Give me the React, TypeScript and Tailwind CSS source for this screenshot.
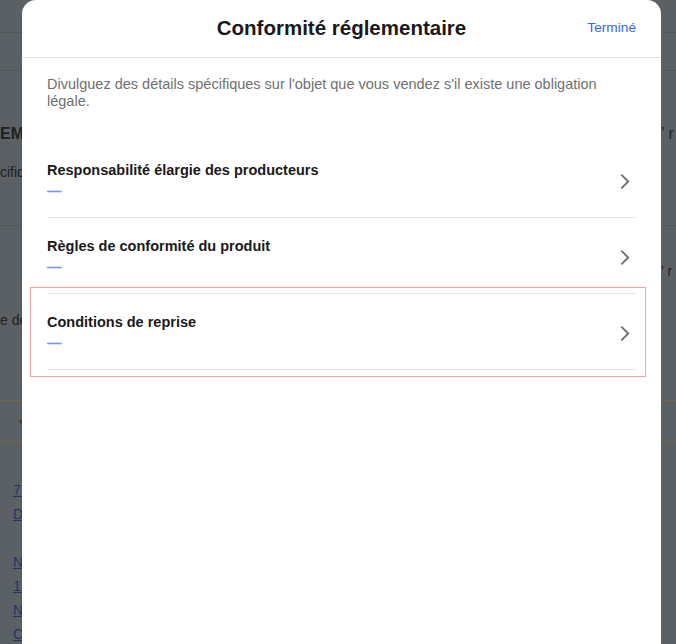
import React from "react";

function Chevron() {
  return (
    <svg width="10" height="15" viewBox="0 0 10 15" fill="none" className="block">
      <path d="M1.8 1.2 L8.2 7.5 L1.8 13.8" stroke="#6e6e6e" strokeWidth="1.8" strokeLinecap="round" strokeLinejoin="round" />
    </svg>
  );
}

function Item({ title, highlight }: { title: string; highlight?: boolean }) {
  return (
    <div className="relative flex h-[76px] border-b border-[#e5e5e5]">
      {highlight && (
        <div className="pointer-events-none absolute -top-[7px] -bottom-[8px] -left-[17px] -right-[10px] border border-[#f3a3a3]" />
      )}
      <div className="flex flex-1 flex-col pt-[18px]">
        <div className="text-[14.5px] font-bold leading-[20px] text-[#191919]">{title}</div>
        <div className="mt-[1px] text-[14.5px] font-bold leading-[20px] text-[#7196ee]">—</div>
      </div>
      <div className="mr-[6px] mt-[32px] self-start">
        <Chevron />
      </div>
    </div>
  );
}

function BgRow({ left, right, className }: { left: React.ReactNode; right?: React.ReactNode; className: string }) {
  return (
    <div className={"grid grid-cols-[661px_1fr] whitespace-nowrap overflow-hidden " + className}>
      <div className="overflow-hidden">{left}</div>
      <div className="overflow-hidden">{right}</div>
    </div>
  );
}

export default function App() {
  return (
    <div className="relative h-[644px] w-[676px] overflow-hidden bg-[#5b6064] font-['Liberation_Sans',Arial,sans-serif]">
      {/* dimmed page underneath */}
      <div className="flex flex-col text-[#1e2225]">
        <div className="h-[33px] border-b border-[#52575a]" />
        <div className="h-[38px] border-b border-[#52575a]" />
        <BgRow
          className="mt-[53px] text-[16px] font-bold leading-[20px]"
          left={<span>EMBALLAGE</span>}
          right={<span className="font-normal">’ r</span>}
        />
        <BgRow className="mt-[18px] text-[14px] leading-[20px]" left={<span>cifiques</span>} />
        <div className="mt-[43px] h-px bg-[#52575a]" />
        <BgRow className="mt-[35px] text-[14px] leading-[20px]" left={<span></span>} right={<span>’ r</span>} />
        <BgRow className="mt-[29px] text-[14px] leading-[20px]" left={<span>e détails</span>} />
        <div className="mt-[70px] h-px bg-[#71684a]" />
        <div className="flex h-[40px] items-center pl-[19px] text-[12px] text-[#2a2e31]">‹</div>
        <div className="h-px bg-[#71684a]" />
        <div className="mt-[36px] flex flex-col pl-[13px] text-[14px] leading-[24px] text-[#27346a]">
          <span className="underline">7 articles</span>
          <span className="underline">Détails</span>
          <span>&nbsp;</span>
          <span className="underline">Nouveau</span>
          <span className="underline">1 an</span>
          <span className="underline">Non</span>
          <span className="underline">Conditions</span>
        </div>
      </div>

      {/* sheet */}
      <div className="absolute left-[22px] top-0 flex h-[680px] w-[639px] flex-col rounded-t-[14px] bg-white">
        <div className="relative flex h-[58px] items-center justify-center border-b border-[#e2e2e2]">
          <div className="text-[20.5px] font-bold text-[#191919]">Conformité réglementaire</div>
          <div className="absolute right-[25px] top-0 flex h-[57px] items-center text-[13.7px] text-[#3665f3]">Terminé</div>
        </div>
        <div className="px-[25px]">
          <p className="pt-[18px] text-[14.5px] leading-[16.5px] text-[#707070]">
            Divulguez des détails spécifiques sur l'objet que vous vendez s'il existe une obligation légale.
          </p>
          <div className="mt-[33px] flex flex-col">
            <Item title="Responsabilité élargie des producteurs" />
            <Item title="Règles de conformité du produit" />
            <Item title="Conditions de reprise" highlight />
          </div>
        </div>
      </div>
    </div>
  );
}
